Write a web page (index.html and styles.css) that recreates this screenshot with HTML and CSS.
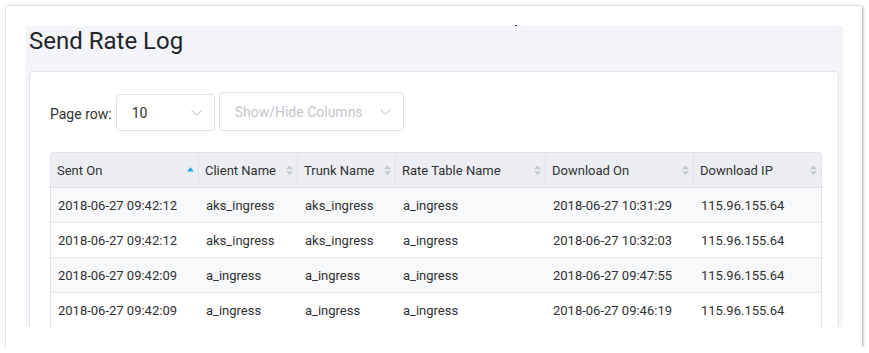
FILE: index.html
```html
<!DOCTYPE html>
<html>
<head>
<meta charset="utf-8">
<link rel="stylesheet" href="styles.css">
</head>
<body>
<div class="frame">
  <span class="speck"></span>
  <div class="viewport">
    <h1 class="title">Send Rate Log</h1>
    <div class="card">
      <div class="toolbar">
        <span class="label">Page row:</span>
        <div class="select select-rows">
          <span class="value">10</span>
          <svg class="chev" width="11" height="6" viewBox="0 0 11 6"><polyline points="0.5,0.5 5.5,5.2 10.5,0.5" fill="none" stroke="#b7bbc3" stroke-width="1"/></svg>
        </div>
        <div class="select select-cols">
          <span class="placeholder">Show/Hide Columns</span>
          <svg class="chev" width="11" height="6" viewBox="0 0 11 6"><polyline points="0.5,0.5 5.5,5.2 10.5,0.5" fill="none" stroke="#b7bbc3" stroke-width="1"/></svg>
        </div>
      </div>
      <table class="grid">
        <colgroup>
          <col class="c1"><col class="c2"><col class="c3"><col class="c4"><col class="c5"><col class="c6">
        </colgroup>
        <thead>
          <tr>
            <th><div class="th"><span>Sent On</span><svg class="sort" width="7" height="11" viewBox="0 0 7 11"><polygon points="0,6.5 3.5,2.2 7,6.5" fill="#1ea6f0"/></svg></div></th>
            <th><div class="th"><span>Client Name</span><svg class="sort" width="7" height="11" viewBox="0 0 7 11"><polygon points="0,4.3 3.5,0.3 7,4.3" fill="#c6c9cf"/><polygon points="0,6.2 3.5,10.2 7,6.2" fill="#c6c9cf"/></svg></div></th>
            <th><div class="th"><span>Trunk Name</span><svg class="sort" width="7" height="11" viewBox="0 0 7 11"><polygon points="0,4.3 3.5,0.3 7,4.3" fill="#c6c9cf"/><polygon points="0,6.2 3.5,10.2 7,6.2" fill="#c6c9cf"/></svg></div></th>
            <th><div class="th"><span>Rate Table Name</span><svg class="sort" width="7" height="11" viewBox="0 0 7 11"><polygon points="0,4.3 3.5,0.3 7,4.3" fill="#c6c9cf"/><polygon points="0,6.2 3.5,10.2 7,6.2" fill="#c6c9cf"/></svg></div></th>
            <th><div class="th"><span>Download On</span><svg class="sort" width="7" height="11" viewBox="0 0 7 11"><polygon points="0,4.3 3.5,0.3 7,4.3" fill="#c6c9cf"/><polygon points="0,6.2 3.5,10.2 7,6.2" fill="#c6c9cf"/></svg></div></th>
            <th><div class="th"><span>Download IP</span><svg class="sort" width="7" height="11" viewBox="0 0 7 11"><polygon points="0,4.3 3.5,0.3 7,4.3" fill="#c6c9cf"/><polygon points="0,6.2 3.5,10.2 7,6.2" fill="#c6c9cf"/></svg></div></th>
          </tr>
        </thead>
        <tbody>
          <tr class="odd"><td>2018-06-27 09:42:12</td><td>aks_ingress</td><td>aks_ingress</td><td>a_ingress</td><td>2018-06-27 10:31:29</td><td>115.96.155.64</td></tr>
          <tr><td>2018-06-27 09:42:12</td><td>aks_ingress</td><td>aks_ingress</td><td>a_ingress</td><td>2018-06-27 10:32:03</td><td>115.96.155.64</td></tr>
          <tr class="odd"><td>2018-06-27 09:42:09</td><td>a_ingress</td><td>a_ingress</td><td>a_ingress</td><td>2018-06-27 09:47:55</td><td>115.96.155.64</td></tr>
          <tr><td>2018-06-27 09:42:09</td><td>a_ingress</td><td>a_ingress</td><td>a_ingress</td><td>2018-06-27 09:46:19</td><td>115.96.155.64</td></tr>
        </tbody>
      </table>
    </div>
  </div>
</div>
</body>
</html>
```

FILE: styles.css
```css
* { box-sizing: border-box; }

html, body {
  margin: 0;
  padding: 0;
  background: #ffffff;
  font-family: Roboto, "Liberation Sans", Arial, sans-serif;
}

.frame {
  position: relative;
  margin: 6px 0 0 6px;
  width: 856px;
  height: 341px;
  background: #ffffff;
  padding: 20px 19px 20px 20px;
  box-shadow: 0 0 2px rgba(0, 0, 0, 0.22), 1px 1px 3px rgba(0, 0, 0, 0.28);
}

.speck {
  position: absolute;
  left: 509px;
  top: 19px;
  width: 2px;
  height: 1px;
  background: #333;
}

.viewport {
  height: 301px;
  background: #f4f5f8;
  overflow: hidden;
}

.title {
  margin: 0;
  padding-left: 3px;
  padding-top: 1px;
  font-size: 24px;
  line-height: 28px;
  font-weight: 400;
  color: #222428;
}

.card {
  margin: 16px 4px 0 3px;
  background: #ffffff;
  border: 1px solid #e2e5ec;
  border-radius: 4px;
  padding: 20px 19px 20px 20px;
}

.toolbar {
  display: flex;
  align-items: flex-end;
  gap: 4px;
}

.label {
  font-size: 14px;
  color: #333;
  line-height: 37px;
  height: 37px;
  padding-top: 2px;
}

.select {
  display: flex;
  align-items: center;
  justify-content: space-between;
  border: 1px solid #dfe2e8;
  border-radius: 4px;
  background: #fff;
  font-size: 14px;
}

.select-rows {
  width: 99px;
  height: 37px;
  padding: 0 12px 0 15px;
}

.select-rows .value {
  color: #333;
}

.select-cols {
  width: 185px;
  height: 39px;
  padding: 0 12px 0 15px;
}

.placeholder {
  color: #c3c6cd;
}

.chev {
  display: block;
}

.grid {
  margin-top: 21px;
  width: 770px;
  table-layout: fixed;
  border-collapse: separate;
  border-spacing: 0;
  border: 1px solid #dfe2e8;
  border-bottom: none;
  border-radius: 4px 4px 0 0;
  font-size: 13px;
  color: #303133;
}

.c1 { width: 148px; }
.c2 { width: 99px; }
.c3 { width: 98px; }
.c4 { width: 150px; }
.c5 { width: 148px; }
.c6 { width: 127px; }

.grid th {
  background: #eceef3;
  height: 35px;
  padding: 0 4px 0 6px;
  font-weight: 400;
  text-align: left;
  border-bottom: 1px solid #dfe2e8;
  border-right: 1px solid #dfe2e8;
}

.grid th:first-child {
  border-top-left-radius: 4px;
}

.grid th:last-child {
  border-right: none;
  border-top-right-radius: 4px;
}

.th {
  display: flex;
  align-items: center;
  justify-content: space-between;
}

.sort {
  display: block;
  flex: none;
}

.grid td {
  height: 35px;
  padding: 0 7px 0 7px;
  border-bottom: 1px solid #e4e7ec;
  white-space: nowrap;
  background: #ffffff;
}

.grid tr.odd td {
  background: #f7f8fa;
}
```
